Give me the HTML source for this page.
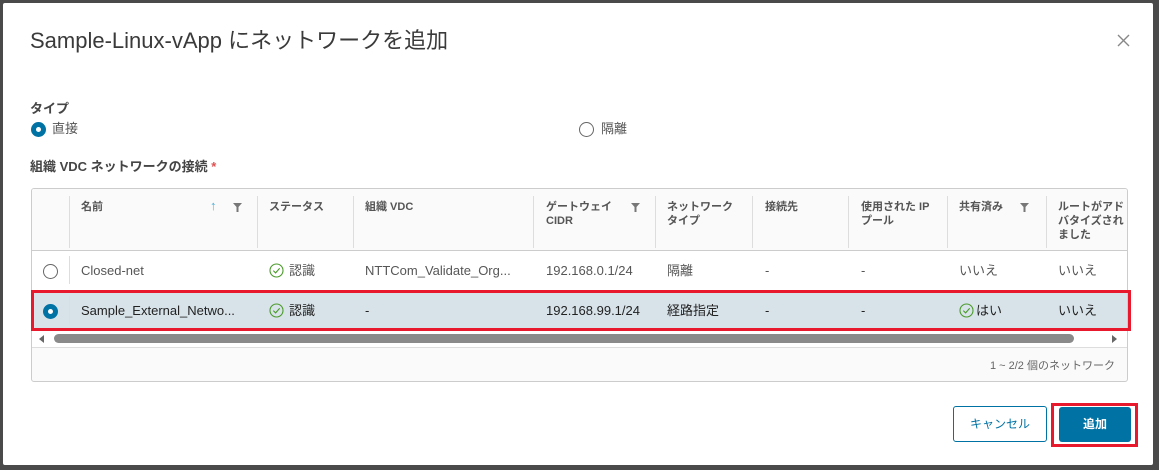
<!DOCTYPE html>
<html><head><meta charset="utf-8"><style>
*{box-sizing:border-box;margin:0;padding:0}
body{width:1159px;height:470px;background:#4a4a4a;font-family:"Liberation Sans","Noto Sans CJK JP",sans-serif;position:relative;overflow:hidden}
.dlg{position:absolute;left:3px;top:3px;width:1150px;height:462px;background:#fff;border-radius:2px}
.a{position:absolute;white-space:nowrap}
.title{left:27px;top:24px;font-size:22px;color:#3a3a3a;line-height:28px}
.close{left:1114px;top:31px}
.lbl{font-size:13px;color:#454545;font-weight:bold;line-height:16px}
.radio{position:absolute;width:15px;height:15px;border-radius:50%}
.on{background:#0072a3;}
.on::after{content:"";position:absolute;left:5px;top:5px;width:5px;height:5px;border-radius:50%;background:#fff}
.off{border:1px solid #666;background:#fff}
.grid{position:absolute;left:31px;top:188px;width:1097px;height:194px;border:1px solid #ccc;border-radius:3px;background:#fafafa;overflow:hidden}
.hdr{position:absolute;left:0;top:0;width:100%;height:62px;border-bottom:1px solid #ccc;background:#fafafa}
.h{position:absolute;top:11px;font-size:11px;font-weight:bold;color:#555;line-height:14px}
.sep{position:absolute;top:7px;width:1px;height:52px;background:#ddd}
.row{position:absolute;left:0;width:100%;height:40px;font-size:13px;color:#565656}
.c{position:absolute;top:12px;white-space:nowrap;line-height:16px;height:16px}
.chk{display:inline-block;vertical-align:-3px;margin-right:5px}
</style></head><body>
<div class="dlg">
<div class="a title">Sample-Linux-vApp にネットワークを追加</div>
<svg class="a close" width="13" height="13" viewBox="0 0 13 13"><path d="M1 1L12 12M12 1L1 12" stroke="#888" stroke-width="1.4"/></svg>
<div class="a lbl" style="left:27px;top:98px">タイプ</div>
<div class="radio on" style="left:28px;top:119px"></div>
<div class="a" style="left:49px;top:118px;font-size:13px;color:#555;line-height:16px">直接</div>
<div class="radio off" style="left:576px;top:119px"></div>
<div class="a" style="left:598px;top:118px;font-size:13px;color:#555;line-height:16px">隔離</div>
<div class="a lbl" style="left:27px;top:156px">組織 VDC ネットワークの接続 <span style="color:#e05050">*</span></div>
</div>
<div class="grid">
<div class="hdr">
<div class="sep" style="left:37px"></div>
<div class="h" style="left:49px">名前</div>
<div class="h" style="left:178px;color:#49afd9;font-size:13px;top:10px">↑</div>
<svg class="a" style="left:201px;top:14px" width="9" height="9" viewBox="0 0 9 9"><path d="M0 0H9L5.5 4V9H3.5V4Z" fill="#777"/></svg>
<div class="sep" style="left:225px"></div>
<div class="h" style="left:237px">ステータス</div>
<div class="sep" style="left:321px"></div>
<div class="h" style="left:333px">組織 VDC</div>
<div class="sep" style="left:501px"></div>
<div class="h" style="left:514px">ゲートウェイ<br>CIDR</div>
<svg class="a" style="left:599px;top:14px" width="9" height="9" viewBox="0 0 9 9"><path d="M0 0H9L5.5 4V9H3.5V4Z" fill="#777"/></svg>
<div class="sep" style="left:623px"></div>
<div class="h" style="left:635px">ネットワーク<br>タイプ</div>
<div class="sep" style="left:720px"></div>
<div class="h" style="left:733px">接続先</div>
<div class="sep" style="left:816px"></div>
<div class="h" style="left:829px">使用された IP<br>プール</div>
<div class="sep" style="left:915px"></div>
<div class="h" style="left:927px">共有済み</div>
<svg class="a" style="left:988px;top:14px" width="9" height="9" viewBox="0 0 9 9"><path d="M0 0H9L5.5 4V9H3.5V4Z" fill="#777"/></svg>
<div class="sep" style="left:1014px"></div>
<div class="h" style="left:1026px">ルートがアド<br>バタイズされ<br>ました</div>
</div>
<div class="row" style="top:62px;background:#fff">
<div class="radio off" style="left:11px;top:13px"></div>
<div class="sep" style="left:37px;top:5px;height:28px"></div>
<div class="c" style="left:49px">Closed-net</div>
<div class="c" style="left:237px"><svg class="chk" width="15" height="15" viewBox="0 0 15 15"><circle cx="7.5" cy="7.5" r="6.5" fill="none" stroke="#4a9a2a" stroke-width="1.1"/><path d="M4.3 7.6L6.6 9.9L10.7 5.3" fill="none" stroke="#4a9a2a" stroke-width="1.1"/></svg>認識</div>
<div class="c" style="left:333px">NTTCom_Validate_Org...</div>
<div class="c" style="left:514px">192.168.0.1/24</div>
<div class="c" style="left:635px">隔離</div>
<div class="c" style="left:733px">-</div>
<div class="c" style="left:829px">-</div>
<div class="c" style="left:927px">いいえ</div>
<div class="c" style="left:1026px">いいえ</div>
</div>
<div class="row" style="top:102px;background:#d8e3e9;color:#222">
<div class="radio on" style="left:11px;top:13px"></div>
<div class="sep" style="left:37px;top:5px;height:28px"></div>
<div class="c" style="left:49px">Sample_External_Netwo...</div>
<div class="c" style="left:237px"><svg class="chk" width="15" height="15" viewBox="0 0 15 15"><circle cx="7.5" cy="7.5" r="6.5" fill="none" stroke="#4a9a2a" stroke-width="1.1"/><path d="M4.3 7.6L6.6 9.9L10.7 5.3" fill="none" stroke="#4a9a2a" stroke-width="1.1"/></svg>認識</div>
<div class="c" style="left:333px">-</div>
<div class="c" style="left:514px">192.168.99.1/24</div>
<div class="c" style="left:635px">経路指定</div>
<div class="c" style="left:733px">-</div>
<div class="c" style="left:829px">-</div>
<div class="c" style="left:927px"><svg class="chk" style="margin-right:2px" width="15" height="15" viewBox="0 0 15 15"><circle cx="7.5" cy="7.5" r="6.5" fill="none" stroke="#4a9a2a" stroke-width="1.1"/><path d="M4.3 7.6L6.6 9.9L10.7 5.3" fill="none" stroke="#4a9a2a" stroke-width="1.1"/></svg>はい</div>
<div class="c" style="left:1026px">いいえ</div>
</div>
<div class="a" style="left:0;top:142px;width:100%;height:16px;background:#fff"></div>
<svg class="a" style="left:7px;top:146px" width="6" height="8"><path d="M5 0V8L0 4Z" fill="#666"/></svg>
<div class="a" style="left:22px;top:145px;width:1020px;height:9px;border-radius:5px;background:#8a8a8a"></div>
<svg class="a" style="left:1080px;top:146px" width="6" height="8"><path d="M0 0V8L5 4Z" fill="#666"/></svg>
<div class="a" style="left:0;top:158px;width:100%;height:1px;background:#ddd"></div>
<div class="a" style="right:12px;top:168px;font-size:11px;color:#666">1 ~ 2/2 個のネットワーク</div>
</div>
<div class="a" style="left:31px;top:290px;width:1100px;height:41px;border:3px solid #e8192c"></div>
<div class="a" style="left:953px;top:406px;width:94px;height:36px;border:1px solid #0072a3;border-radius:3px;color:#0072a3;font-size:12px;text-align:center;line-height:34px">キャンセル</div>
<div class="a" style="left:1051px;top:403px;width:87px;height:44px;border:3px solid #e8192c"></div>
<div class="a" style="left:1059px;top:407px;width:72px;height:35px;background:#0072a3;border-radius:3px;color:#fff;font-size:12px;font-weight:bold;text-align:center;line-height:35px">追加</div>
</body></html>
